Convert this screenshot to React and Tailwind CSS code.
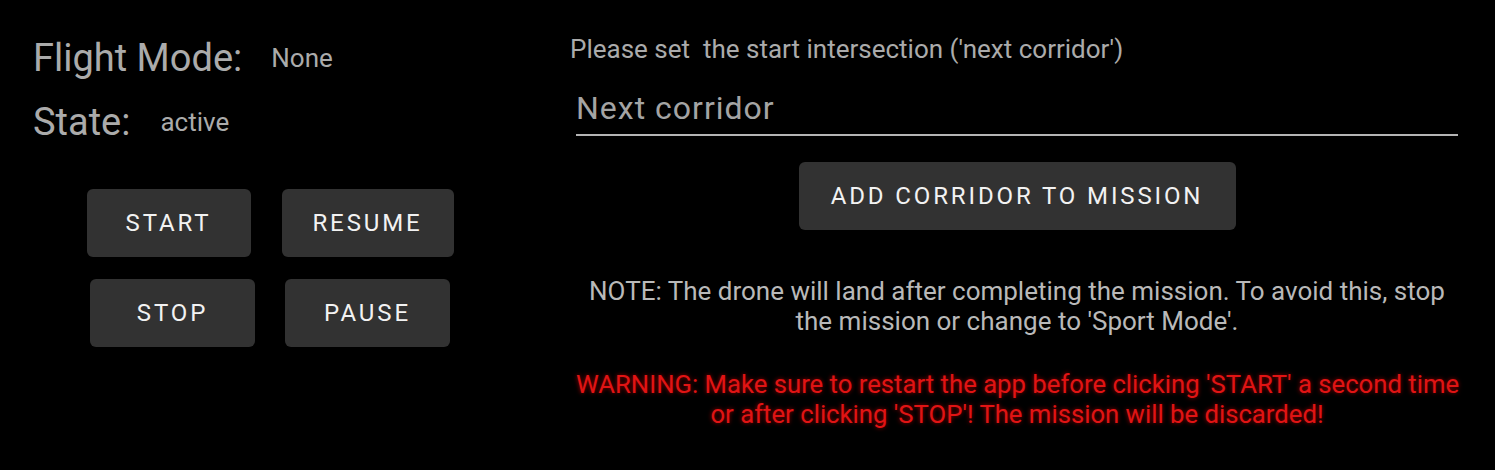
import React from "react";

const ControlButton = ({ label, width }) => (
  <button
    className={`h-[68px] ${width} rounded-[6px] bg-[#323232] text-[24px] tracking-[0.12em] text-[#f2f2f2]`}
  >
    {label}
  </button>
);

const App = () => {
  return (
    <div className="flex h-[470px] w-full bg-black font-['Roboto',sans-serif]">
      {/* left: status + controls */}
      <div className="w-[540px] shrink-0 pt-[34px]">
        <div className="flex items-center gap-[29px] pl-[33px]">
          <span className="text-[38px] leading-[48px] text-[#ababab]">Flight Mode:</span>
          <span className="text-[26px] text-[#ababab]">None</span>
        </div>
        <div className="mt-[16px] flex items-center gap-[30px] pl-[33px]">
          <span className="text-[38px] leading-[48px] text-[#ababab]">State:</span>
          <span className="text-[26px] text-[#ababab]">active</span>
        </div>
        <div className="mt-[43px] flex justify-center gap-[31px]">
          <ControlButton label="START" width="w-[164px]" />
          <ControlButton label="RESUME" width="w-[172px]" />
        </div>
        <div className="mt-[22px] flex justify-center gap-[30px]">
          <ControlButton label="STOP" width="w-[165px]" />
          <ControlButton label="PAUSE" width="w-[165px]" />
        </div>
      </div>

      {/* right: mission setup */}
      <div className="ml-[36px] flex w-[882px] shrink-0 flex-col pt-[33px]">
        <p className="-ml-[6px] text-[26px] leading-[32px] text-[#ababab]">
          Please set&nbsp; the start intersection ('next corridor')
        </p>
        <div className="mt-[23px] border-b-2 border-[#b4b4b4] pb-[6px] text-[32px] leading-[40px] tracking-[1px] text-[#a4a4a4]">
          Next corridor
        </div>
        <div className="mt-[26px] flex justify-center">
          <button className="h-[68px] w-[437px] rounded-[6px] bg-[#323232] text-[24px] tracking-[0.12em] text-[#f2f2f2]">
            ADD CORRIDOR TO MISSION
          </button>
        </div>
        <p className="mt-[46px] whitespace-nowrap text-center text-[26px] leading-[30px] text-[#b9b9b9]">
          NOTE: The drone will land after completing the mission. To avoid this, stop
          <br />
          the mission or change to 'Sport Mode'.
        </p>
        <p className="mt-[33px] whitespace-nowrap text-center text-[25.7px] leading-[30px] text-[#e01414] [text-shadow:0_0_4px_rgba(255,0,0,0.6)]">
          WARNING: Make sure to restart the app before clicking 'START' a second time
          <br />
          or after clicking 'STOP'! The mission will be discarded!
        </p>
      </div>
    </div>
  );
};

export default App;
